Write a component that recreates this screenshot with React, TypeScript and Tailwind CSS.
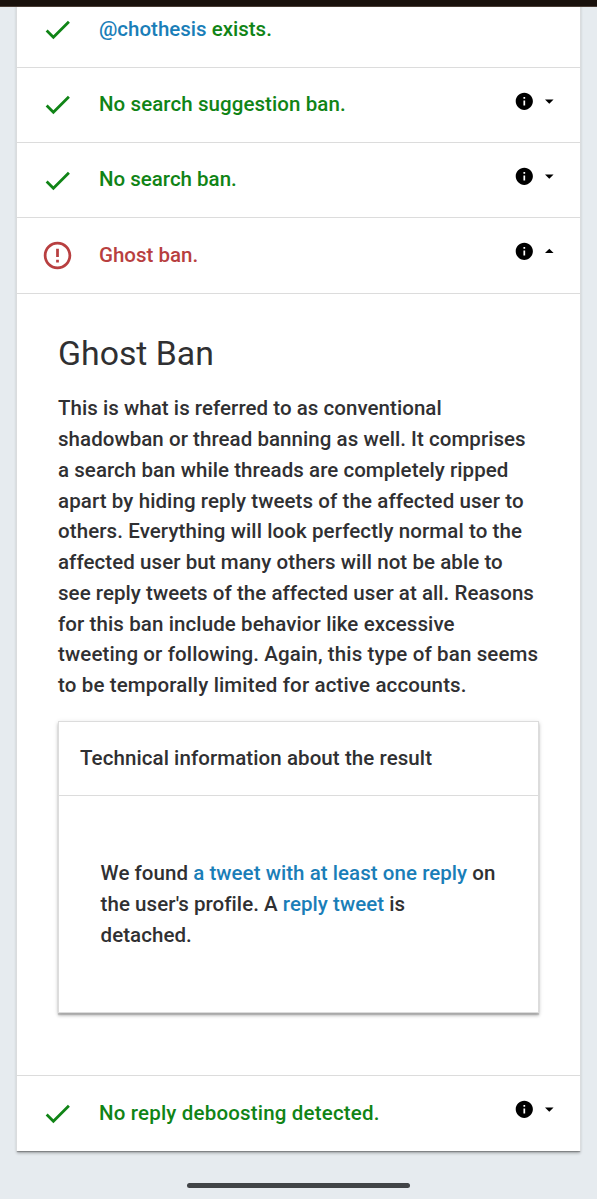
import type { ReactNode } from "react";

const Check = () => (
  <svg viewBox="0 0 24 24" className="h-[33px] w-[33px] shrink-0 fill-[#108416]">
    <path d="M9 16.17L4.83 12l-1.42 1.41L9 19 21 7l-1.41-1.41z" />
  </svg>
);

const ErrorOutline = () => (
  <svg viewBox="0 0 24 24" className="h-[33px] w-[33px] shrink-0 fill-[#b83f40]">
    <path d="M11 15h2v2h-2zm0-8h2v6h-2zm.99-5C6.47 2 2 6.48 2 12s4.47 10 9.99 10C17.52 22 22 17.52 22 12S17.52 2 11.99 2zM12 20c-4.42 0-8-3.58-8-8s3.58-8 8-8 8 3.58 8 8-3.58 8-8 8z" />
  </svg>
);

const Toggle = ({ open }: { open?: boolean }) => (
  <div className="mr-5 mb-2 ml-auto flex items-center gap-[5px]">
    <svg viewBox="0 0 24 24" className="h-[20.6px] w-[20.6px] fill-black">
      <path d="M12 2C6.48 2 2 6.48 2 12s4.48 10 10 10 10-4.48 10-10S17.52 2 12 2zm1 15h-2v-6h2v6zm0-8h-2V7h2v2z" />
    </svg>
    <svg viewBox="0 0 24 24" className="h-[20.6px] w-[20.6px] fill-black">
      <path d={open ? "M7 14l5-5 5 5z" : "M7 10l5 5 5-5z"} />
    </svg>
  </div>
);

type RowProps = { children: ReactNode; failed?: boolean; open?: boolean; toggle?: boolean };

const Row = ({ children, failed, open, toggle = true }: RowProps) => (
  <div className="flex h-[75.33px] shrink-0 items-center border-b border-[#dcdcdc] pl-[24.4px] last:border-b-0">
    {failed ? <ErrorOutline /> : <Check />}
    <span
      className={
        failed
          ? "ml-[24.6px] pb-px whitespace-nowrap text-[#b83f40]"
          : "ml-[24.6px] pb-px whitespace-nowrap text-[#108416]"
      }
    >
      {children}
    </span>
    {toggle && <Toggle open={open} />}
  </div>
);

type Line = { text: ReactNode; tracking?: string };

const Lines = ({ lines }: { lines: Line[] }) => (
  <p>
    {lines.map(({ text, tracking = "tracking-[0.05px]" }, i) => (
      <span key={i} className={`block whitespace-nowrap ${tracking}`}>
        {text}{" "}
      </span>
    ))}
  </p>
);

const description: Line[] = [
  { text: "This is what is referred to as conventional" },
  { text: "shadowban or thread banning as well. It comprises" },
  { text: "a search ban while threads are completely ripped" },
  { text: "apart by hiding reply tweets of the affected user to", tracking: "tracking-[0.09px]" },
  { text: "others. Everything will look perfectly normal to the", tracking: "tracking-[0.1px]" },
  { text: "affected user but many others will not be able to", tracking: "tracking-[0.07px]" },
  { text: "see reply tweets of the affected user at all. Reasons" },
  { text: "for this ban include behavior like excessive", tracking: "tracking-[0.1px]" },
  { text: "tweeting or following. Again, this type of ban seems", tracking: "tracking-[0.13px]" },
  { text: "to be temporally limited for active accounts.", tracking: "tracking-[0.14px]" },
];

const Link = ({ children }: { children: ReactNode }) => (
  <a className="text-[#1a7eb8]">{children}</a>
);

export default function App() {
  return (
    <div className="flex h-[1199px] w-[597px] flex-col overflow-hidden bg-[#e6ebef] font-[Roboto,sans-serif] text-[20.5px] leading-[30.8px] font-medium text-[#303032]">
      <div className="z-10 h-[7px] shrink-0 border-b border-[#493c34] bg-[#19110c]" />
      <main className="mx-4 -mt-[14.6px] flex h-[1158.6px] shrink-0 flex-col border-x border-[#dadcde] bg-white shadow-[0_3px_3px_-1px_rgba(0,0,0,0.3),0_2px_1px_-1px_rgba(0,0,0,0.25)]">
        <Row toggle={false}>
          <Link>@chothesis</Link> exists.
        </Row>
        <Row>
          <span className="tracking-[0.08px]">No search suggestion ban.</span>
        </Row>
        <Row>No search ban.</Row>
        <Row failed open>
          Ghost ban.
        </Row>
        <section className="h-[782.3px] shrink-0 border-b border-[#dcdcdc] px-[41px] pt-10">
          <h1 className="h-[59.4px] text-[33.8px] leading-[40px] font-normal">Ghost Ban</h1>
          <Lines lines={description} />
          <div className="mt-[20px] h-[292px] border border-[#dcdcdc] bg-white shadow-[0_3px_3px_0_rgba(0,0,0,0.18),0_1px_5px_0_rgba(0,0,0,0.12),0_2px_1px_0_rgba(0,0,0,0.14)]">
            <div className="flex h-[74px] items-center border-b border-[#dcdcdc] pl-[21px] tracking-[0.08px]">
              Technical information about the result
            </div>
            <div className="pt-[62px] pl-[41.6px]">
              <Lines
                lines={[
                  {
                    text: (
                      <>
                        We found <Link>a tweet with at least one reply</Link> on
                      </>
                    ),
                  },
                  {
                    text: (
                      <>
                        the user's profile. A <Link>reply tweet</Link> is
                      </>
                    ),
                  },
                  { text: "detached." },
                ]}
              />
            </div>
          </div>
        </section>
        <Row>
          <span className="tracking-[0.18px]">No reply deboosting detected.</span>
        </Row>
      </main>
      <div className="mx-auto mt-[32px] h-[5px] w-[223px] shrink-0 rounded-full bg-[#414447]" />
    </div>
  );
}
